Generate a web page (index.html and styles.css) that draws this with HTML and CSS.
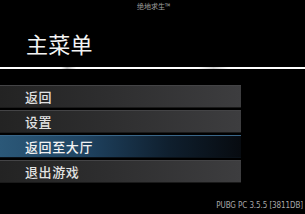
FILE: index.html
```html
<!DOCTYPE html>
<html lang="zh">
<head>
<meta charset="utf-8">
<link rel="stylesheet" href="styles.css">
</head>
<body>
<div class="screen">
  <div class="brand">绝地求生™</div>
  <h1 class="title">主菜单</h1>
  <div class="rule"></div>
  <ul class="menu">
    <li class="item">返回</li>
    <li class="item">设置</li>
    <li class="item active">返回至大厅</li>
    <li class="item">退出游戏</li>
  </ul>
  <div class="version">PUBG PC 3.5.5 [3811DB]</div>
</div>
</body>
</html>
```
FILE: styles.css
```css
html, body {
  margin: 0;
  padding: 0;
  background: #000;
}
.screen {
  width: 305px;
  height: 214px;
  display: flex;
  flex-direction: column;
  font-family: "Noto Sans CJK SC", "Noto Sans", sans-serif;
  color: #fff;
  overflow: hidden;
}
.brand {
  text-align: center;
  font-size: 7px;
  line-height: 9px;
  color: #a0a0a0;
  padding-top: 2px;
  padding-left: 2px;
}
.title {
  margin: 0;
  padding: 19px 0 0 26px;
  font-size: 22px;
  font-weight: 400;
  line-height: 26px;
  letter-spacing: 0.3px;
  color: #f4f4f4;
}
.rule {
  margin-top: 11px;
  height: 2px;
  background: linear-gradient(90deg, #fff 0%, #fff 20%, #bdbdbd 22%, #fff 25%, #fff 65%, #cfcfcf 70%, #fff 75%, #fff 100%);
}
.menu {
  list-style: none;
  margin: 16px 0 0 0;
  padding: 0;
  display: flex;
  flex-direction: column;
  gap: 2px;
  width: 241px;
}
.item {
  height: 23px;
  box-sizing: border-box;
  padding-left: 25px;
  font-size: 13px;
  font-weight: 500;
  letter-spacing: 0.6px;
  color: #e2e2e2;
  background: linear-gradient(90deg, #232323 0%, #2e2e2f 45%, #3d3d3f 100%);
  border-top: 1px solid #444446;
  border-bottom: 1px solid #1a1a1a;
  line-height: 21px;
}
.item.active {
  background: linear-gradient(90deg, #2b5878 0%, #1f4361 35%, #0f1f2e 70%, #070b10 100%);
  border-top: 1px solid #3a6688;
  border-bottom: 1px solid #0a1118;
  color: #f2f2f2;
}
.version {
  margin-top: auto;
  align-self: flex-end;
  padding: 0 2px 4px 0;
  font-family: "DejaVu Sans Condensed", "DejaVu Sans", sans-serif;
  font-size: 8px;
  line-height: 9px;
  color: #a8a8a8;
  letter-spacing: -0.1px;
}
```
